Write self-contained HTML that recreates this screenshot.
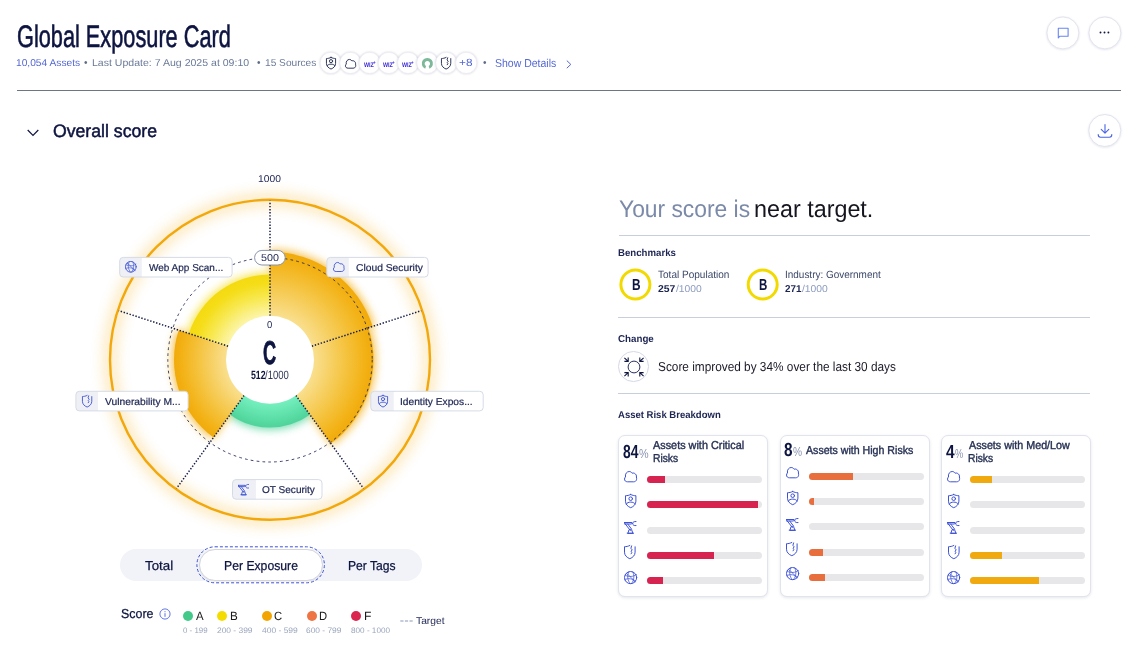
<!DOCTYPE html>
<html lang="en"><head><meta charset="utf-8"><title>Global Exposure Card</title>
<style>
*{box-sizing:border-box}
html,body{margin:0;padding:0;background:#fff}
body{width:1130px;height:669px;position:relative;overflow:hidden;font-family:"Liberation Sans",sans-serif}
.t{position:absolute;white-space:nowrap;line-height:1;text-rendering:geometricPrecision;transform-origin:0 0;font-family:"Liberation Sans",sans-serif}
.chart{position:absolute;left:0;top:0}
.ic{position:absolute;overflow:visible}
.hr{position:absolute;height:1px}
.pill{position:absolute;left:120px;top:549px;width:301.500px;height:32px;border-radius:16px;background:#f1f3f9}
.sel{position:absolute;left:198.500px;top:548.500px;width:124px;height:32.500px;border-radius:17px;background:#fff;border:1px solid #d4d5dc;box-shadow:0 1px 0 rgba(0,0,0,.06)}
.dot{position:absolute;width:10px;height:10px;border-radius:50%;top:611px}
.card{position:absolute;background:#fff;border:1px solid #e1e3ed;border-radius:7px;box-shadow:0 1px 3px rgba(40,50,110,.12)}
.bar{position:absolute;height:7px;border-radius:3.500px;background:#e7e7e9;overflow:hidden}
.bar b{position:absolute;left:0;top:0;bottom:0;display:block}
</style></head>
<body>
<svg class="chart" width="1130" height="669" viewBox="0 0 1130 669">
<defs>
<filter id="blur6" x="-20%" y="-20%" width="140%" height="140%"><feGaussianBlur stdDeviation="7"/></filter>
<filter id="blur4" x="-30%" y="-30%" width="160%" height="160%"><feGaussianBlur stdDeviation="4.5"/></filter>
<radialGradient id="g0" gradientUnits="userSpaceOnUse" cx="270.0" cy="359.8" r="108.0"><stop offset="0.407" stop-color="#f9df8e"/><stop offset="0.704" stop-color="#f5c544"/><stop offset="0.911" stop-color="#f3b216"/><stop offset="1.000" stop-color="#f1aa0a"/></radialGradient>
<radialGradient id="g1" gradientUnits="userSpaceOnUse" cx="270.0" cy="359.8" r="103.5"><stop offset="0.425" stop-color="#f9df8e"/><stop offset="0.713" stop-color="#f5c544"/><stop offset="0.914" stop-color="#f3b216"/><stop offset="1.000" stop-color="#f1aa0a"/></radialGradient>
<radialGradient id="g2" gradientUnits="userSpaceOnUse" cx="270.0" cy="359.8" r="67.8"><stop offset="0.649" stop-color="#74efbe"/><stop offset="0.842" stop-color="#5fe0aa"/><stop offset="1.000" stop-color="#4ed39a"/></radialGradient>
<radialGradient id="g3" gradientUnits="userSpaceOnUse" cx="270.0" cy="359.8" r="96.0"><stop offset="0.458" stop-color="#f9df8e"/><stop offset="0.729" stop-color="#f5c544"/><stop offset="0.919" stop-color="#f3b216"/><stop offset="1.000" stop-color="#f1aa0a"/></radialGradient>
<radialGradient id="g4" gradientUnits="userSpaceOnUse" cx="270.0" cy="359.8" r="85.3"><stop offset="0.516" stop-color="#fcf5aa"/><stop offset="0.734" stop-color="#f8e850"/><stop offset="0.903" stop-color="#f5dd18"/><stop offset="1.000" stop-color="#f4da10"/></radialGradient>
</defs>
<circle cx="270.0" cy="359.8" r="160" fill="none" stroke="#f7b21c" stroke-width="12" opacity="0.32" filter="url(#blur6)"/>
<path d="M270.0,359.8 L270.00,249.80 A110.0,110.0 0 0 1 374.62,325.81 Z" fill="#f3ae14" opacity="0.8" filter="url(#blur4)"/>
<path d="M270.0,359.8 L370.34,327.20 A105.5,105.5 0 0 1 332.01,445.15 Z" fill="#f3ae14" opacity="0.8" filter="url(#blur4)"/>
<path d="M270.0,359.8 L311.03,416.27 A69.8,69.8 0 0 1 228.97,416.27 Z" fill="#4fd39a" opacity="0.8" filter="url(#blur4)"/>
<path d="M270.0,359.8 L212.40,439.08 A98.0,98.0 0 0 1 176.80,329.52 Z" fill="#f3ae14" opacity="0.8" filter="url(#blur4)"/>
<path d="M270.0,359.8 L186.97,332.82 A87.3,87.3 0 0 1 270.00,272.50 Z" fill="#f6de1a" opacity="0.8" filter="url(#blur4)"/>
<path d="M270.0,359.8 L270.00,251.80 A108.0,108.0 0 0 1 372.71,326.43 Z" fill="url(#g0)"/>
<path d="M270.0,359.8 L368.43,327.82 A103.5,103.5 0 0 1 330.84,443.53 Z" fill="url(#g1)"/>
<path d="M270.0,359.8 L309.85,414.65 A67.8,67.8 0 0 1 230.15,414.65 Z" fill="url(#g2)"/>
<path d="M270.0,359.8 L213.57,437.47 A96.0,96.0 0 0 1 178.70,330.13 Z" fill="url(#g3)"/>
<path d="M270.0,359.8 L188.87,333.44 A85.3,85.3 0 0 1 270.00,274.50 Z" fill="url(#g4)"/>
<circle cx="270.0" cy="359.8" r="160" fill="none" stroke="#f2a70a" stroke-width="2.4"/>
<circle cx="270.0" cy="359.8" r="102.2" fill="none" stroke="#1c2452" stroke-width="0.85" stroke-dasharray="2.7 3.2"/>
<line x1="270.00" y1="315.80" x2="270.00" y2="200.80" stroke="#141c48" stroke-width="1.5" stroke-dasharray="1.4 1.7"/>
<line x1="311.85" y1="346.20" x2="421.22" y2="310.67" stroke="#141c48" stroke-width="1.5" stroke-dasharray="1.4 1.7"/>
<line x1="295.86" y1="395.40" x2="363.46" y2="488.43" stroke="#141c48" stroke-width="1.5" stroke-dasharray="1.4 1.7"/>
<line x1="244.14" y1="395.40" x2="176.54" y2="488.43" stroke="#141c48" stroke-width="1.5" stroke-dasharray="1.4 1.7"/>
<line x1="228.15" y1="346.20" x2="118.78" y2="310.67" stroke="#141c48" stroke-width="1.5" stroke-dasharray="1.4 1.7"/>
<circle cx="270.0" cy="359.8" r="44" fill="#fff"/>
<rect x="254.6" y="250.4" width="30.6" height="14.6" rx="7.3" fill="#fff" stroke="#8a94ab" stroke-width="1"/>
</svg>
<div class="hr" style="left:17px;top:90px;width:1104px;background:#6e7686"></div>
<svg class="chart" width="1130" height="669" viewBox="0 0 1130 669"><defs><filter id="sh" x="-30%" y="-30%" width="160%" height="160%"><feGaussianBlur stdDeviation="1.1"/></filter></defs><circle cx="1062.9" cy="33.5" r="16.3" fill="#28326e" opacity="0.13" filter="url(#sh)"/><circle cx="1062.9" cy="32.9" r="16" fill="#fff" stroke="#e2e4ee" stroke-width="1"/><circle cx="1104.9" cy="33.5" r="16.3" fill="#28326e" opacity="0.13" filter="url(#sh)"/><circle cx="1104.9" cy="32.9" r="16" fill="#fff" stroke="#e2e4ee" stroke-width="1"/><circle cx="1104.8" cy="131.1" r="16.3" fill="#28326e" opacity="0.13" filter="url(#sh)"/><circle cx="1104.8" cy="130.5" r="16" fill="#fff" stroke="#e2e4ee" stroke-width="1"/><circle cx="635.4" cy="284.5" r="14.5" fill="#fff" stroke="#f2da00" stroke-width="3"/><circle cx="762.7" cy="284.5" r="14.5" fill="#fff" stroke="#f2da00" stroke-width="3"/><circle cx="330.8" cy="62.9" r="11" fill="#3c3c6e" opacity="0.2" filter="url(#sh)"/><circle cx="330.8" cy="62.9" r="10.6" fill="#fff" stroke="#e9e9f1" stroke-width="0.7"/><circle cx="350.4" cy="62.9" r="11" fill="#3c3c6e" opacity="0.2" filter="url(#sh)"/><circle cx="350.4" cy="62.9" r="10.6" fill="#fff" stroke="#e9e9f1" stroke-width="0.7"/><circle cx="369.7" cy="62.9" r="11" fill="#3c3c6e" opacity="0.2" filter="url(#sh)"/><circle cx="369.7" cy="62.9" r="10.6" fill="#fff" stroke="#e9e9f1" stroke-width="0.7"/><circle cx="388.8" cy="62.9" r="11" fill="#3c3c6e" opacity="0.2" filter="url(#sh)"/><circle cx="388.8" cy="62.9" r="10.6" fill="#fff" stroke="#e9e9f1" stroke-width="0.7"/><circle cx="408.1" cy="62.9" r="11" fill="#3c3c6e" opacity="0.2" filter="url(#sh)"/><circle cx="408.1" cy="62.9" r="10.6" fill="#fff" stroke="#e9e9f1" stroke-width="0.7"/><circle cx="427.4" cy="62.9" r="11" fill="#3c3c6e" opacity="0.2" filter="url(#sh)"/><circle cx="427.4" cy="62.9" r="10.6" fill="#fff" stroke="#e9e9f1" stroke-width="0.7"/><circle cx="446.3" cy="62.9" r="11" fill="#3c3c6e" opacity="0.2" filter="url(#sh)"/><circle cx="446.3" cy="62.9" r="10.6" fill="#fff" stroke="#e9e9f1" stroke-width="0.7"/><circle cx="466.2" cy="62.9" r="11" fill="#3c3c6e" opacity="0.2" filter="url(#sh)"/><circle cx="466.2" cy="62.9" r="10.6" fill="#fff" stroke="#e9e9f1" stroke-width="0.7"/></svg>
<svg class="ic" style="left:1057px;top:26.5px" width="13" height="13" viewBox="0 0 13 13"><path d="M1.3 1.2h9.8v8h-8.2l-1.600 1.700z" fill="none" stroke="#6a85f3" stroke-width="1.1" stroke-linejoin="round"/></svg>
<svg class="ic" style="left:1098px;top:30px" width="14" height="5" viewBox="0 0 14 5"><circle cx="2.5" cy="2.5" r="0.95" fill="#10163f"/><circle cx="6.5" cy="2.5" r="0.95" fill="#10163f"/><circle cx="10.4" cy="2.5" r="0.95" fill="#10163f"/></svg>
<svg class="ic" style="left:1096.500px;top:123px" width="16" height="16" viewBox="0 0 16 16"><path d="M8 1.500v8.500M4.200 6.400L8 10.200l3.800-3.800M1.200 11.500c0 2.200.8 2.700 2.300 2.700h9c1.500 0 2.300-.5 2.300-2.700" fill="none" stroke="#4a63e6" stroke-width="1.100" stroke-linecap="round" stroke-linejoin="round"/></svg>
<svg class="ic" style="left:27px;top:128.500px" width="12" height="8" viewBox="0 0 12 8"><path d="M0.700 1l5.300 5.500L11.300 1" fill="none" stroke="#10163f" stroke-width="1.200"/></svg>
<svg class="ic" style="left:565.500px;top:60px" width="6" height="9" viewBox="0 0 6 9"><path d="M0.800 0.600l4 3.800-4 3.800" fill="none" stroke="#5468d4" stroke-width="1"/></svg>
<svg class="ic" style="left:326.1px;top:57.1px" width="16" height="16"><g transform="scale(0.88)" fill="none" stroke="#262e54" stroke-width="1.08" stroke-linejoin="round" stroke-linecap="round"><path d="M5.7 .5C4 1.4 2.2 1.7 .5 1.7V7.2C.5 10.4 2.8 12.6 5.7 13.7C8.6 12.6 10.9 10.4 10.9 7.2V1.7C9.2 1.7 7.4 1.4 5.7 .5Z"/><circle cx="5.7" cy="4.7" r="1.8"/><path d="M1.3 9.9C2.5 7.4 8.9 7.4 10.1 9.9"/></g></svg>
<svg class="ic" style="left:344.9px;top:58.6px" width="16" height="16"><g transform="scale(0.85)" fill="none" stroke="#262e54" stroke-width="1.12" stroke-linejoin="round" stroke-linecap="round"><path d="M3.2 10.8C1.6 10.8 .5 9.6 .5 8.1C.5 7.1 1 6.4 1.5 6C.8 2.9 2.9 .5 5.2 .5C6.5 .5 7.5 1.2 8.1 2.2C8.8 1.9 9.7 1.9 10.4 2.3C12 3 12.7 4.6 12.4 6C12.6 6.8 12.8 7.8 12.5 8.7C12.2 10 11.1 10.8 9.9 10.8Z"/></g></svg>
<svg class="ic" style="left:0;top:0" width="1130" height="100"><path d="M425.15 68.70A5.600 5.600 0 1 1 429.55 68.70L428.65 66.00A2.700 2.700 0 1 0 426.05 66.00Z" fill="#7db89a"/></svg>
<svg class="ic" style="left:441.2px;top:57.1px" width="16" height="16"><g transform="scale(0.88)" fill="none" stroke="#262e54" stroke-width="1.08" stroke-linejoin="round" stroke-linecap="round"><path d="M5.8 .5C4 1.4 2.2 1.7 .5 1.7V7.2C.5 10.4 2.9 12.6 5.8 13.7C8.7 12.6 11.1 10.4 11.1 7.2V1.8"/><path d="M7.6 .9L6.9 3.3L8.2 4.9L7.1 6.2L7.8 7.4L7.1 8.8"/></g></svg>
<svg class="ic" style="left:0;top:0" width="1130" height="669"><rect x="119.70" y="257.40" width="112.40" height="19.60" rx="3.5" fill="#fff"/><path d="M123.20 257.40H141.80V277.00H123.20A3.5 3.5 0 0 1 119.70 273.50V260.90A3.5 3.5 0 0 1 123.20 257.40Z" fill="#eef0f6"/><rect x="119.70" y="257.40" width="112.40" height="19.60" rx="3.5" fill="none" stroke="#d5dbe6"/></svg>
<svg class="ic" style="left:124.8px;top:260.9px" width="16" height="16"><g transform="scale(0.88)" fill="none" stroke="#3d52d5" stroke-width="1.02" stroke-linejoin="round" stroke-linecap="round"><circle cx="6.6" cy="6.6" r="6.1"/><path stroke-width="0.75" d="M1.2 4.2C4.5 6.3 9.5 5.8 12.4 3.6M.8 8.6C4 6.8 9.4 7.6 11.8 10.4M4.8 .9C2.8 4.500 3.500 9.600 6.200 12.600M8.800 1C10.800 4.600 10 9.800 7.400 12.600M2.400 2.500C5.500 4.500 9 8 10.800 11.200"/></g></svg>
<svg class="ic" style="left:0;top:0" width="1130" height="669"><rect x="326.90" y="257.40" width="101.20" height="19.60" rx="3.5" fill="#fff"/><path d="M330.40 257.40H348.80V277.00H330.40A3.5 3.5 0 0 1 326.90 273.50V260.90A3.5 3.5 0 0 1 330.40 257.40Z" fill="#eef0f6"/><rect x="326.90" y="257.40" width="101.20" height="19.60" rx="3.5" fill="none" stroke="#d5dbe6"/></svg>
<svg class="ic" style="left:332.9px;top:261.9px" width="16" height="16"><g transform="scale(0.88)" fill="none" stroke="#3d52d5" stroke-width="1.02" stroke-linejoin="round" stroke-linecap="round"><path d="M3.2 10.8C1.6 10.8 .5 9.6 .5 8.1C.5 7.1 1 6.4 1.5 6C.8 2.9 2.9 .5 5.2 .5C6.5 .5 7.5 1.2 8.1 2.2C8.8 1.9 9.7 1.9 10.4 2.3C12 3 12.7 4.6 12.4 6C12.6 6.8 12.8 7.8 12.5 8.7C12.2 10 11.1 10.8 9.9 10.8Z"/></g></svg>
<svg class="ic" style="left:0;top:0" width="1130" height="669"><rect x="75.90" y="391.30" width="112.20" height="19.60" rx="3.5" fill="#fff"/><path d="M79.40 391.30H98.00V410.90H79.40A3.5 3.5 0 0 1 75.90 407.40V394.80A3.5 3.5 0 0 1 79.40 391.30Z" fill="#eef0f6"/><rect x="75.90" y="391.30" width="112.20" height="19.60" rx="3.5" fill="none" stroke="#d5dbe6"/></svg>
<svg class="ic" style="left:81.9px;top:394.9px" width="16" height="16"><g transform="scale(0.88)" fill="none" stroke="#3d52d5" stroke-width="1.02" stroke-linejoin="round" stroke-linecap="round"><path d="M5.8 .5C4 1.4 2.2 1.7 .5 1.7V7.2C.5 10.4 2.9 12.6 5.8 13.7C8.7 12.6 11.1 10.4 11.1 7.2V1.8"/><path d="M7.6 .9L6.9 3.3L8.2 4.9L7.1 6.2L7.8 7.4L7.1 8.8"/></g></svg>
<svg class="ic" style="left:0;top:0" width="1130" height="669"><rect x="370.80" y="391.30" width="112.40" height="19.60" rx="3.5" fill="#fff"/><path d="M374.30 391.30H393.70V410.90H374.30A3.5 3.5 0 0 1 370.80 407.40V394.80A3.5 3.5 0 0 1 374.30 391.30Z" fill="#eef0f6"/><rect x="370.80" y="391.30" width="112.40" height="19.60" rx="3.5" fill="none" stroke="#d5dbe6"/></svg>
<svg class="ic" style="left:377.5px;top:394.9px" width="16" height="16"><g transform="scale(0.88)" fill="none" stroke="#3d52d5" stroke-width="1.02" stroke-linejoin="round" stroke-linecap="round"><path d="M5.7 .5C4 1.4 2.2 1.7 .5 1.7V7.2C.5 10.4 2.8 12.6 5.7 13.7C8.6 12.6 10.9 10.4 10.9 7.2V1.7C9.2 1.7 7.4 1.4 5.7 .5Z"/><circle cx="5.7" cy="4.7" r="1.8"/><path d="M1.3 9.9C2.5 7.4 8.9 7.4 10.1 9.9"/></g></svg>
<svg class="ic" style="left:0;top:0" width="1130" height="669"><rect x="232.50" y="479.60" width="89.50" height="19.60" rx="3.5" fill="#fff"/><path d="M236.00 479.60H255.90V499.20H236.00A3.5 3.5 0 0 1 232.50 495.70V483.10A3.5 3.5 0 0 1 236.00 479.60Z" fill="#eef0f6"/><rect x="232.50" y="479.60" width="89.50" height="19.60" rx="3.5" fill="none" stroke="#d5dbe6"/></svg>
<svg class="ic" style="left:238.4px;top:484.1px" width="16" height="16"><g transform="scale(0.88)" fill="none" stroke="#3d52d5" stroke-width="1.02" stroke-linejoin="round" stroke-linecap="round"><path d="M.5 1.5H7.6M.9 3H7.2M.5 1.5L1 3M1.3 3L6.3 9.4M3.7 3L7.5 8M4 12L5 8.7H7.6L8.8 12ZM3.2 12.2H9.6M7.6 2.2H8.7M12 .5C10 .3 8.7 1.2 8.7 2.6C8.7 4 10 4.9 12 4.6"/></g></svg>
<div class="pill"></div><div class="sel"></div>
<svg class="ic" style="left:195px;top:545px" width="132" height="40" viewBox="0 0 132 40"><rect x="1.900" y="1.800" width="127.500" height="36" rx="18" fill="none" stroke="#3d52d5" stroke-width="1" stroke-dasharray="3 2"/></svg>
<div class="dot" style="left:183px;background:#45c98b"></div>
<div class="dot" style="left:217px;background:#f5dc00"></div>
<div class="dot" style="left:262px;background:#f2a500"></div>
<div class="dot" style="left:306.6px;background:#ee7443"></div>
<div class="dot" style="left:351px;background:#d92550"></div>
<svg class="ic" style="left:158.500px;top:607.500px" width="12" height="12" viewBox="0 0 12 12"><circle cx="6" cy="6" r="5.1" fill="none" stroke="#4a5fe0" stroke-width="0.85"/><path d="M6 5.200v3.600M6 3.200v1" stroke="#4a5fe0" stroke-width="0.9" fill="none"/></svg>
<svg class="ic" style="left:399.500px;top:620px" width="14" height="2" viewBox="0 0 14 2"><path d="M0.300 1h12.400" stroke="#b3bbce" stroke-width="1.300" stroke-dasharray="3.200 1.400" fill="none"/></svg>
<div class="hr" style="left:619px;top:235px;width:470.500px;background:#c9cedc"></div>
<div class="hr" style="left:618px;top:317px;width:472px;background:#c9cedc"></div>
<div class="hr" style="left:618px;top:393px;width:472px;background:#c9cedc"></div>
<div style="position:absolute;left:618.3px;top:351.3px;width:30.5px;height:30.5px;border-radius:50%;border:1px solid #d6d9e6;background:#fff"></div>
<svg class="ic" style="left:621.6px;top:354.8px" width="24" height="24" viewBox="0 0 24 24"><circle cx="12" cy="12" r="5.9" fill="none" stroke="#2a3260" stroke-width="1"/><g fill="none" stroke="#10163f" stroke-width="1.1"><path d="M2.40 2.80L6.20 6.40M2.40 6.40H6.20V2.60"/><path d="M21.60 2.80L17.80 6.40M21.60 6.40H17.80V2.60"/><path d="M2.40 21.20L6.20 17.60M2.40 17.60H6.20V21.40"/><path d="M21.60 21.20L17.80 17.60M21.60 17.60H17.80V21.40"/></g></svg>
<div class="card" style="left:617.6px;top:434.5px;width:150.0px;height:162px"></div>
<div class="bar" style="left:646.8px;top:476.0px;width:115.2px"><b style="width:18.4px;background:#d6234f"></b></div>
<svg class="ic" style="left:623.8px;top:470.5px" width="16" height="16"><g transform="scale(1.0)" fill="none" stroke="#3d52d5" stroke-width="1.00" stroke-linejoin="round" stroke-linecap="round"><path d="M3.2 10.8C1.6 10.8 .5 9.6 .5 8.1C.5 7.1 1 6.4 1.5 6C.8 2.9 2.9 .5 5.2 .5C6.5 .5 7.5 1.2 8.1 2.2C8.8 1.9 9.7 1.9 10.4 2.3C12 3 12.7 4.6 12.4 6C12.6 6.8 12.8 7.8 12.5 8.7C12.2 10 11.1 10.8 9.9 10.8Z"/></g></svg>
<div class="bar" style="left:646.8px;top:501.3px;width:115.2px"><b style="width:111.7px;background:#d6234f"></b></div>
<svg class="ic" style="left:624.6px;top:494.3px" width="16" height="16"><g transform="scale(1.0)" fill="none" stroke="#3d52d5" stroke-width="1.00" stroke-linejoin="round" stroke-linecap="round"><path d="M5.7 .5C4 1.4 2.2 1.7 .5 1.7V7.2C.5 10.4 2.8 12.6 5.7 13.7C8.6 12.6 10.9 10.4 10.9 7.2V1.7C9.2 1.7 7.4 1.4 5.7 .5Z"/><circle cx="5.7" cy="4.7" r="1.8"/><path d="M1.3 9.9C2.5 7.4 8.9 7.4 10.1 9.9"/></g></svg>
<div class="bar" style="left:646.8px;top:526.6px;width:115.2px"><b style="width:0.0px;background:#d6234f"></b></div>
<svg class="ic" style="left:624.1px;top:521.0px" width="16" height="16"><g transform="scale(1.0)" fill="none" stroke="#3d52d5" stroke-width="1.00" stroke-linejoin="round" stroke-linecap="round"><path d="M.5 1.5H7.6M.9 3H7.2M.5 1.5L1 3M1.3 3L6.3 9.4M3.7 3L7.5 8M4 12L5 8.7H7.6L8.8 12ZM3.2 12.2H9.6M7.6 2.2H8.7M12 .5C10 .3 8.7 1.2 8.7 2.6C8.7 4 10 4.9 12 4.6"/></g></svg>
<div class="bar" style="left:646.8px;top:551.9px;width:115.2px"><b style="width:66.8px;background:#d6234f"></b></div>
<svg class="ic" style="left:624.4px;top:545.0px" width="16" height="16"><g transform="scale(1.0)" fill="none" stroke="#3d52d5" stroke-width="1.00" stroke-linejoin="round" stroke-linecap="round"><path d="M5.8 .5C4 1.4 2.2 1.7 .5 1.7V7.2C.5 10.4 2.9 12.6 5.8 13.7C8.7 12.6 11.1 10.4 11.1 7.2V1.8"/><path d="M7.6 .9L6.9 3.3L8.2 4.9L7.1 6.2L7.8 7.4L7.1 8.8"/></g></svg>
<div class="bar" style="left:646.8px;top:577.2px;width:115.2px"><b style="width:16.1px;background:#d6234f"></b></div>
<svg class="ic" style="left:623.8px;top:570.7px" width="16" height="16"><g transform="scale(1.0)" fill="none" stroke="#3d52d5" stroke-width="1.00" stroke-linejoin="round" stroke-linecap="round"><circle cx="6.6" cy="6.6" r="6.1"/><path stroke-width="0.75" d="M1.2 4.2C4.5 6.3 9.5 5.8 12.4 3.6M.8 8.6C4 6.8 9.4 7.6 11.8 10.4M4.8 .9C2.8 4.500 3.500 9.600 6.200 12.600M8.800 1C10.800 4.600 10 9.800 7.400 12.600M2.400 2.500C5.500 4.500 9 8 10.800 11.200"/></g></svg>
<div class="card" style="left:779.6px;top:434.5px;width:150.0px;height:162px"></div>
<div class="bar" style="left:808.9px;top:472.7px;width:115.4px"><b style="width:44.2px;background:#e86e3d"></b></div>
<svg class="ic" style="left:785.8px;top:467.2px" width="16" height="16"><g transform="scale(1.0)" fill="none" stroke="#3d52d5" stroke-width="1.00" stroke-linejoin="round" stroke-linecap="round"><path d="M3.2 10.8C1.6 10.8 .5 9.6 .5 8.1C.5 7.1 1 6.4 1.5 6C.8 2.9 2.9 .5 5.2 .5C6.5 .5 7.5 1.2 8.1 2.2C8.8 1.9 9.7 1.9 10.4 2.3C12 3 12.7 4.6 12.4 6C12.6 6.8 12.8 7.8 12.5 8.7C12.2 10 11.1 10.8 9.9 10.8Z"/></g></svg>
<div class="bar" style="left:808.9px;top:498.0px;width:115.4px"><b style="width:4.8px;background:#e86e3d"></b></div>
<svg class="ic" style="left:786.6px;top:491.0px" width="16" height="16"><g transform="scale(1.0)" fill="none" stroke="#3d52d5" stroke-width="1.00" stroke-linejoin="round" stroke-linecap="round"><path d="M5.7 .5C4 1.4 2.2 1.7 .5 1.7V7.2C.5 10.4 2.8 12.6 5.7 13.7C8.6 12.6 10.9 10.4 10.9 7.2V1.7C9.2 1.7 7.4 1.4 5.7 .5Z"/><circle cx="5.7" cy="4.7" r="1.8"/><path d="M1.3 9.9C2.5 7.4 8.9 7.4 10.1 9.9"/></g></svg>
<div class="bar" style="left:808.9px;top:523.3px;width:115.4px"><b style="width:0.0px;background:#e86e3d"></b></div>
<svg class="ic" style="left:786.1px;top:517.7px" width="16" height="16"><g transform="scale(1.0)" fill="none" stroke="#3d52d5" stroke-width="1.00" stroke-linejoin="round" stroke-linecap="round"><path d="M.5 1.5H7.6M.9 3H7.2M.5 1.5L1 3M1.3 3L6.3 9.4M3.7 3L7.5 8M4 12L5 8.7H7.6L8.8 12ZM3.2 12.2H9.6M7.6 2.2H8.7M12 .5C10 .3 8.7 1.2 8.7 2.6C8.7 4 10 4.9 12 4.6"/></g></svg>
<div class="bar" style="left:808.9px;top:548.6px;width:115.4px"><b style="width:13.8px;background:#e86e3d"></b></div>
<svg class="ic" style="left:786.4px;top:541.7px" width="16" height="16"><g transform="scale(1.0)" fill="none" stroke="#3d52d5" stroke-width="1.00" stroke-linejoin="round" stroke-linecap="round"><path d="M5.8 .5C4 1.4 2.2 1.7 .5 1.7V7.2C.5 10.4 2.9 12.6 5.8 13.7C8.7 12.6 11.1 10.4 11.1 7.2V1.8"/><path d="M7.6 .9L6.9 3.3L8.2 4.9L7.1 6.2L7.8 7.4L7.1 8.8"/></g></svg>
<div class="bar" style="left:808.9px;top:573.9px;width:115.4px"><b style="width:16.2px;background:#e86e3d"></b></div>
<svg class="ic" style="left:785.8px;top:567.4px" width="16" height="16"><g transform="scale(1.0)" fill="none" stroke="#3d52d5" stroke-width="1.00" stroke-linejoin="round" stroke-linecap="round"><circle cx="6.6" cy="6.6" r="6.1"/><path stroke-width="0.75" d="M1.2 4.2C4.5 6.3 9.5 5.8 12.4 3.6M.8 8.6C4 6.8 9.4 7.6 11.8 10.4M4.8 .9C2.8 4.500 3.500 9.600 6.200 12.600M8.800 1C10.800 4.600 10 9.800 7.400 12.600M2.400 2.500C5.500 4.500 9 8 10.800 11.200"/></g></svg>
<div class="card" style="left:940.7px;top:434.5px;width:150.0px;height:162px"></div>
<div class="bar" style="left:969.9px;top:476.0px;width:115.1px"><b style="width:22.1px;background:#f0a90e"></b></div>
<svg class="ic" style="left:947.0px;top:470.5px" width="16" height="16"><g transform="scale(1.0)" fill="none" stroke="#3d52d5" stroke-width="1.00" stroke-linejoin="round" stroke-linecap="round"><path d="M3.2 10.8C1.6 10.8 .5 9.6 .5 8.1C.5 7.1 1 6.4 1.5 6C.8 2.9 2.9 .5 5.2 .5C6.5 .5 7.5 1.2 8.1 2.2C8.8 1.9 9.7 1.9 10.4 2.3C12 3 12.7 4.6 12.4 6C12.6 6.8 12.8 7.8 12.5 8.7C12.2 10 11.1 10.8 9.9 10.8Z"/></g></svg>
<div class="bar" style="left:969.9px;top:501.3px;width:115.1px"><b style="width:0.0px;background:#f0a90e"></b></div>
<svg class="ic" style="left:947.8px;top:494.3px" width="16" height="16"><g transform="scale(1.0)" fill="none" stroke="#3d52d5" stroke-width="1.00" stroke-linejoin="round" stroke-linecap="round"><path d="M5.7 .5C4 1.4 2.2 1.7 .5 1.7V7.2C.5 10.4 2.8 12.6 5.7 13.7C8.6 12.6 10.9 10.4 10.9 7.2V1.7C9.2 1.7 7.4 1.4 5.7 .5Z"/><circle cx="5.7" cy="4.7" r="1.8"/><path d="M1.3 9.9C2.5 7.4 8.9 7.4 10.1 9.9"/></g></svg>
<div class="bar" style="left:969.9px;top:526.6px;width:115.1px"><b style="width:0.0px;background:#f0a90e"></b></div>
<svg class="ic" style="left:947.3px;top:521.0px" width="16" height="16"><g transform="scale(1.0)" fill="none" stroke="#3d52d5" stroke-width="1.00" stroke-linejoin="round" stroke-linecap="round"><path d="M.5 1.5H7.6M.9 3H7.2M.5 1.5L1 3M1.3 3L6.3 9.4M3.7 3L7.5 8M4 12L5 8.7H7.6L8.8 12ZM3.2 12.2H9.6M7.6 2.2H8.7M12 .5C10 .3 8.7 1.2 8.7 2.6C8.7 4 10 4.9 12 4.6"/></g></svg>
<div class="bar" style="left:969.9px;top:551.9px;width:115.1px"><b style="width:32.2px;background:#f0a90e"></b></div>
<svg class="ic" style="left:947.6px;top:545.0px" width="16" height="16"><g transform="scale(1.0)" fill="none" stroke="#3d52d5" stroke-width="1.00" stroke-linejoin="round" stroke-linecap="round"><path d="M5.8 .5C4 1.4 2.2 1.7 .5 1.7V7.2C.5 10.4 2.9 12.6 5.8 13.7C8.7 12.6 11.1 10.4 11.1 7.2V1.8"/><path d="M7.6 .9L6.9 3.3L8.2 4.9L7.1 6.2L7.8 7.4L7.1 8.8"/></g></svg>
<div class="bar" style="left:969.9px;top:577.2px;width:115.1px"><b style="width:69.4px;background:#f0a90e"></b></div>
<svg class="ic" style="left:947.0px;top:570.7px" width="16" height="16"><g transform="scale(1.0)" fill="none" stroke="#3d52d5" stroke-width="1.00" stroke-linejoin="round" stroke-linecap="round"><circle cx="6.6" cy="6.6" r="6.1"/><path stroke-width="0.75" d="M1.2 4.2C4.5 6.3 9.5 5.8 12.4 3.6M.8 8.6C4 6.8 9.4 7.6 11.8 10.4M4.8 .9C2.8 4.500 3.500 9.600 6.200 12.600M8.800 1C10.800 4.600 10 9.800 7.400 12.600M2.400 2.500C5.500 4.500 9 8 10.800 11.200"/></g></svg>
<span class="t" style="left:17.02px;top:21.00px;font-size:31px;font-weight:400;color:#0d1440;transform:scaleX(0.7012);-webkit-text-stroke:0.6px #0d1440;">Global Exposure Card</span>
<span class="t" style="left:16.27px;top:59.00px;font-size:10px;font-weight:400;color:#5468d4;transform:scaleX(1.0203);">10,054 Assets</span>
<span class="t" style="left:91.89px;top:59.00px;font-size:10px;font-weight:400;color:#6b7a99;transform:scaleX(1.0545);">Last Update: 7 Aug 2025 at 09:10</span>
<span class="t" style="left:264.88px;top:59.00px;font-size:10px;font-weight:400;color:#6b7a99;transform:scaleX(1.0149);">15 Sources</span>
<span class="t" style="left:84.08px;top:58.00px;font-size:10.5px;font-weight:400;color:#5f6c88;transform:scaleX(0.9562);">•</span>
<span class="t" style="left:257.38px;top:58.00px;font-size:10.5px;font-weight:400;color:#5f6c88;transform:scaleX(0.9563);">•</span>
<span class="t" style="left:482.98px;top:58.00px;font-size:10.5px;font-weight:400;color:#5f6c88;transform:scaleX(0.9563);">•</span>
<span class="t" style="left:363.74px;top:63.00px;font-size:6.6px;font-weight:700;color:#3a2bd8;transform:scaleX(0.8168);">WIZ</span>
<span class="t" style="left:382.84px;top:63.00px;font-size:6.6px;font-weight:700;color:#3a2bd8;transform:scaleX(0.8168);">WIZ</span>
<span class="t" style="left:402.04px;top:63.00px;font-size:6.6px;font-weight:700;color:#3a2bd8;transform:scaleX(0.8168);">WIZ</span>
<span class="t" style="left:372.94px;top:61.00px;font-size:4.5px;font-weight:700;color:#3a2bd8;transform:scaleX(1.0238);">+</span>
<span class="t" style="left:392.04px;top:61.00px;font-size:4.5px;font-weight:700;color:#3a2bd8;transform:scaleX(1.0238);">+</span>
<span class="t" style="left:411.24px;top:61.00px;font-size:4.5px;font-weight:700;color:#3a2bd8;transform:scaleX(1.0238);">+</span>
<span class="t" style="left:459.20px;top:58.00px;font-size:10.5px;font-weight:400;color:#5468d4;transform:scaleX(1.1230);">+8</span>
<span class="t" style="left:495.07px;top:59.00px;font-size:11.5px;font-weight:400;color:#5468d4;transform:scaleX(0.9129);">Show Details</span>
<span class="t" style="left:52.54px;top:122.00px;font-size:18px;font-weight:400;color:#0d1440;transform:scaleX(0.9807);-webkit-text-stroke:0.5px #0d1440;">Overall score</span>
<span class="t" style="left:258.27px;top:175.00px;font-size:10px;font-weight:400;color:#1c2452;transform:scaleX(1.0275);">1000</span>
<span class="t" style="left:260.80px;top:254.00px;font-size:10px;font-weight:400;color:#1c2452;transform:scaleX(1.0735);">500</span>
<span class="t" style="left:267.28px;top:321.00px;font-size:10px;font-weight:400;color:#1c2452;transform:scaleX(0.9468);">0</span>
<span class="t" style="left:263.22px;top:336.00px;font-size:33px;font-weight:700;color:#0d1440;transform:scaleX(0.5517);-webkit-text-stroke:0.8px #0d1440;">C</span>
<span class="t" style="left:251.01px;top:369.00px;font-size:12px;font-weight:700;color:#0d1440;transform:scaleX(0.7300);">512</span>
<span class="t" style="left:265.38px;top:369.00px;font-size:12px;font-weight:400;color:#2c3558;transform:scaleX(0.7933);">/1000</span>
<span class="t" style="left:148.90px;top:264.00px;font-size:10px;font-weight:400;color:#1c2452;transform:scaleX(0.9988);-webkit-text-stroke:0.2px #1c2452;">Web App Scan...</span>
<span class="t" style="left:355.56px;top:264.00px;font-size:10px;font-weight:400;color:#1c2452;transform:scaleX(1.0285);-webkit-text-stroke:0.2px #1c2452;">Cloud Security</span>
<span class="t" style="left:105.10px;top:398.00px;font-size:10px;font-weight:400;color:#1c2452;transform:scaleX(1.0266);-webkit-text-stroke:0.2px #1c2452;">Vulnerability M...</span>
<span class="t" style="left:400.14px;top:398.00px;font-size:10px;font-weight:400;color:#1c2452;transform:scaleX(1.0210);-webkit-text-stroke:0.2px #1c2452;">Identity Expos...</span>
<span class="t" style="left:261.51px;top:486.00px;font-size:10px;font-weight:400;color:#1c2452;transform:scaleX(1.0051);-webkit-text-stroke:0.2px #1c2452;">OT Security</span>
<span class="t" style="left:145.24px;top:559.00px;font-size:13px;font-weight:400;color:#0d1440;transform:scaleX(1.0231);-webkit-text-stroke:0.25px #0d1440;">Total</span>
<span class="t" style="left:223.64px;top:559.00px;font-size:13px;font-weight:400;color:#0d1440;transform:scaleX(0.9385);-webkit-text-stroke:0.25px #0d1440;">Per Exposure</span>
<span class="t" style="left:347.94px;top:559.00px;font-size:13px;font-weight:400;color:#0d1440;transform:scaleX(0.9325);-webkit-text-stroke:0.25px #0d1440;">Per Tags</span>
<span class="t" style="left:120.57px;top:607.00px;font-size:13px;font-weight:400;color:#0d1440;transform:scaleX(0.9568);-webkit-text-stroke:0.25px #0d1440;">Score</span>
<span class="t" style="left:196.26px;top:610.00px;font-size:12px;font-weight:400;color:#1a1a1a;transform:scaleX(0.9502);">A</span>
<span class="t" style="left:229.75px;top:610.00px;font-size:12px;font-weight:400;color:#1a1a1a;transform:scaleX(0.9714);">B</span>
<span class="t" style="left:274.31px;top:610.00px;font-size:12px;font-weight:400;color:#1a1a1a;transform:scaleX(0.9427);">C</span>
<span class="t" style="left:319.28px;top:610.00px;font-size:12px;font-weight:400;color:#1a1a1a;transform:scaleX(0.9367);">D</span>
<span class="t" style="left:363.72px;top:610.00px;font-size:12px;font-weight:400;color:#1a1a1a;transform:scaleX(1.0116);">F</span>
<span class="t" style="left:183.26px;top:627.00px;font-size:8px;font-weight:400;color:#9aa5bc;transform:scaleX(0.9848);">0 - 199</span>
<span class="t" style="left:217.03px;top:627.00px;font-size:8px;font-weight:400;color:#9aa5bc;transform:scaleX(1.0497);">200 - 399</span>
<span class="t" style="left:261.64px;top:627.00px;font-size:8px;font-weight:400;color:#9aa5bc;transform:scaleX(1.0583);">400 - 599</span>
<span class="t" style="left:306.32px;top:627.00px;font-size:8px;font-weight:400;color:#9aa5bc;transform:scaleX(1.0468);">600 - 799</span>
<span class="t" style="left:350.53px;top:627.00px;font-size:8px;font-weight:400;color:#9aa5bc;transform:scaleX(1.0198);">800 - 1000</span>
<span class="t" style="left:415.79px;top:617.00px;font-size:10px;font-weight:400;color:#1c2452;transform:scaleX(1.0283);">Target</span>
<span class="t" style="left:619.09px;top:198.00px;font-size:24px;font-weight:400;color:#7b8aa8;transform:scaleX(0.9510);">Your score is</span>
<span class="t" style="left:754.12px;top:198.00px;font-size:24px;font-weight:400;color:#15151f;transform:scaleX(0.9721);">near target.</span>
<span class="t" style="left:618.08px;top:249.00px;font-size:10px;font-weight:700;color:#1c2452;transform:scaleX(0.9646);">Benchmarks</span>
<span class="t" style="left:631.63px;top:278.00px;font-size:16px;font-weight:700;color:#0d1440;transform:scaleX(0.7411);">B</span>
<span class="t" style="left:758.75px;top:278.00px;font-size:16px;font-weight:700;color:#0d1440;transform:scaleX(0.7211);">B</span>
<span class="t" style="left:658.01px;top:270.00px;font-size:10.5px;font-weight:400;color:#3b4768;transform:scaleX(0.9554);">Total Population</span>
<span class="t" style="left:658.27px;top:285.00px;font-size:10px;font-weight:700;color:#1c2452;transform:scaleX(1.0376);">257</span>
<span class="t" style="left:675.57px;top:285.00px;font-size:10px;font-weight:400;color:#8c9bc0;transform:scaleX(1.0295);">/1000</span>
<span class="t" style="left:784.58px;top:270.00px;font-size:10.5px;font-weight:400;color:#3b4768;transform:scaleX(0.9484);">Industry: Government</span>
<span class="t" style="left:785.08px;top:285.00px;font-size:10px;font-weight:700;color:#1c2452;transform:scaleX(0.9872);">271</span>
<span class="t" style="left:801.67px;top:285.00px;font-size:10px;font-weight:400;color:#8c9bc0;transform:scaleX(1.0336);">/1000</span>
<span class="t" style="left:618.40px;top:335.00px;font-size:10px;font-weight:700;color:#1c2452;transform:scaleX(0.9762);">Change</span>
<span class="t" style="left:658.34px;top:360.00px;font-size:13px;font-weight:400;color:#1a1a28;transform:scaleX(0.9096);">Score improved by 34% over the last 30 days</span>
<span class="t" style="left:618.41px;top:411.00px;font-size:10px;font-weight:700;color:#1c2452;transform:scaleX(0.9527);">Asset Risk Breakdown</span>
<span class="t" style="left:623.04px;top:443.00px;font-size:19px;font-weight:700;color:#0d1440;transform:scaleX(0.7303);">84</span>
<span class="t" style="left:638.76px;top:447.00px;font-size:13px;font-weight:400;color:#8a94b0;transform:scaleX(0.8310);">%</span>
<span class="t" style="left:653.33px;top:441.00px;font-size:11.5px;font-weight:400;color:#273154;transform:scaleX(0.9445);-webkit-text-stroke:0.4px #273154;">Assets with Critical</span>
<span class="t" style="left:652.61px;top:454.00px;font-size:11.5px;font-weight:400;color:#273154;transform:scaleX(0.8953);-webkit-text-stroke:0.4px #273154;">Risks</span>
<span class="t" style="left:784.20px;top:441.00px;font-size:19px;font-weight:700;color:#0d1440;transform:scaleX(0.8071);">8</span>
<span class="t" style="left:792.98px;top:445.00px;font-size:13px;font-weight:400;color:#8a94b0;transform:scaleX(0.7843);">%</span>
<span class="t" style="left:806.42px;top:446.00px;font-size:11.5px;font-weight:400;color:#273154;transform:scaleX(0.9225);-webkit-text-stroke:0.4px #273154;">Assets with High Risks</span>
<span class="t" style="left:946.28px;top:443.00px;font-size:19px;font-weight:700;color:#0d1440;transform:scaleX(0.8132);">4</span>
<span class="t" style="left:955.02px;top:447.00px;font-size:13px;font-weight:400;color:#8a94b0;transform:scaleX(0.7096);">%</span>
<span class="t" style="left:968.73px;top:441.00px;font-size:11.5px;font-weight:400;color:#273154;transform:scaleX(0.9330);-webkit-text-stroke:0.4px #273154;">Assets with Med/Low</span>
<span class="t" style="left:968.01px;top:454.00px;font-size:11.5px;font-weight:400;color:#273154;transform:scaleX(0.8953);-webkit-text-stroke:0.4px #273154;">Risks</span>
</body></html>
